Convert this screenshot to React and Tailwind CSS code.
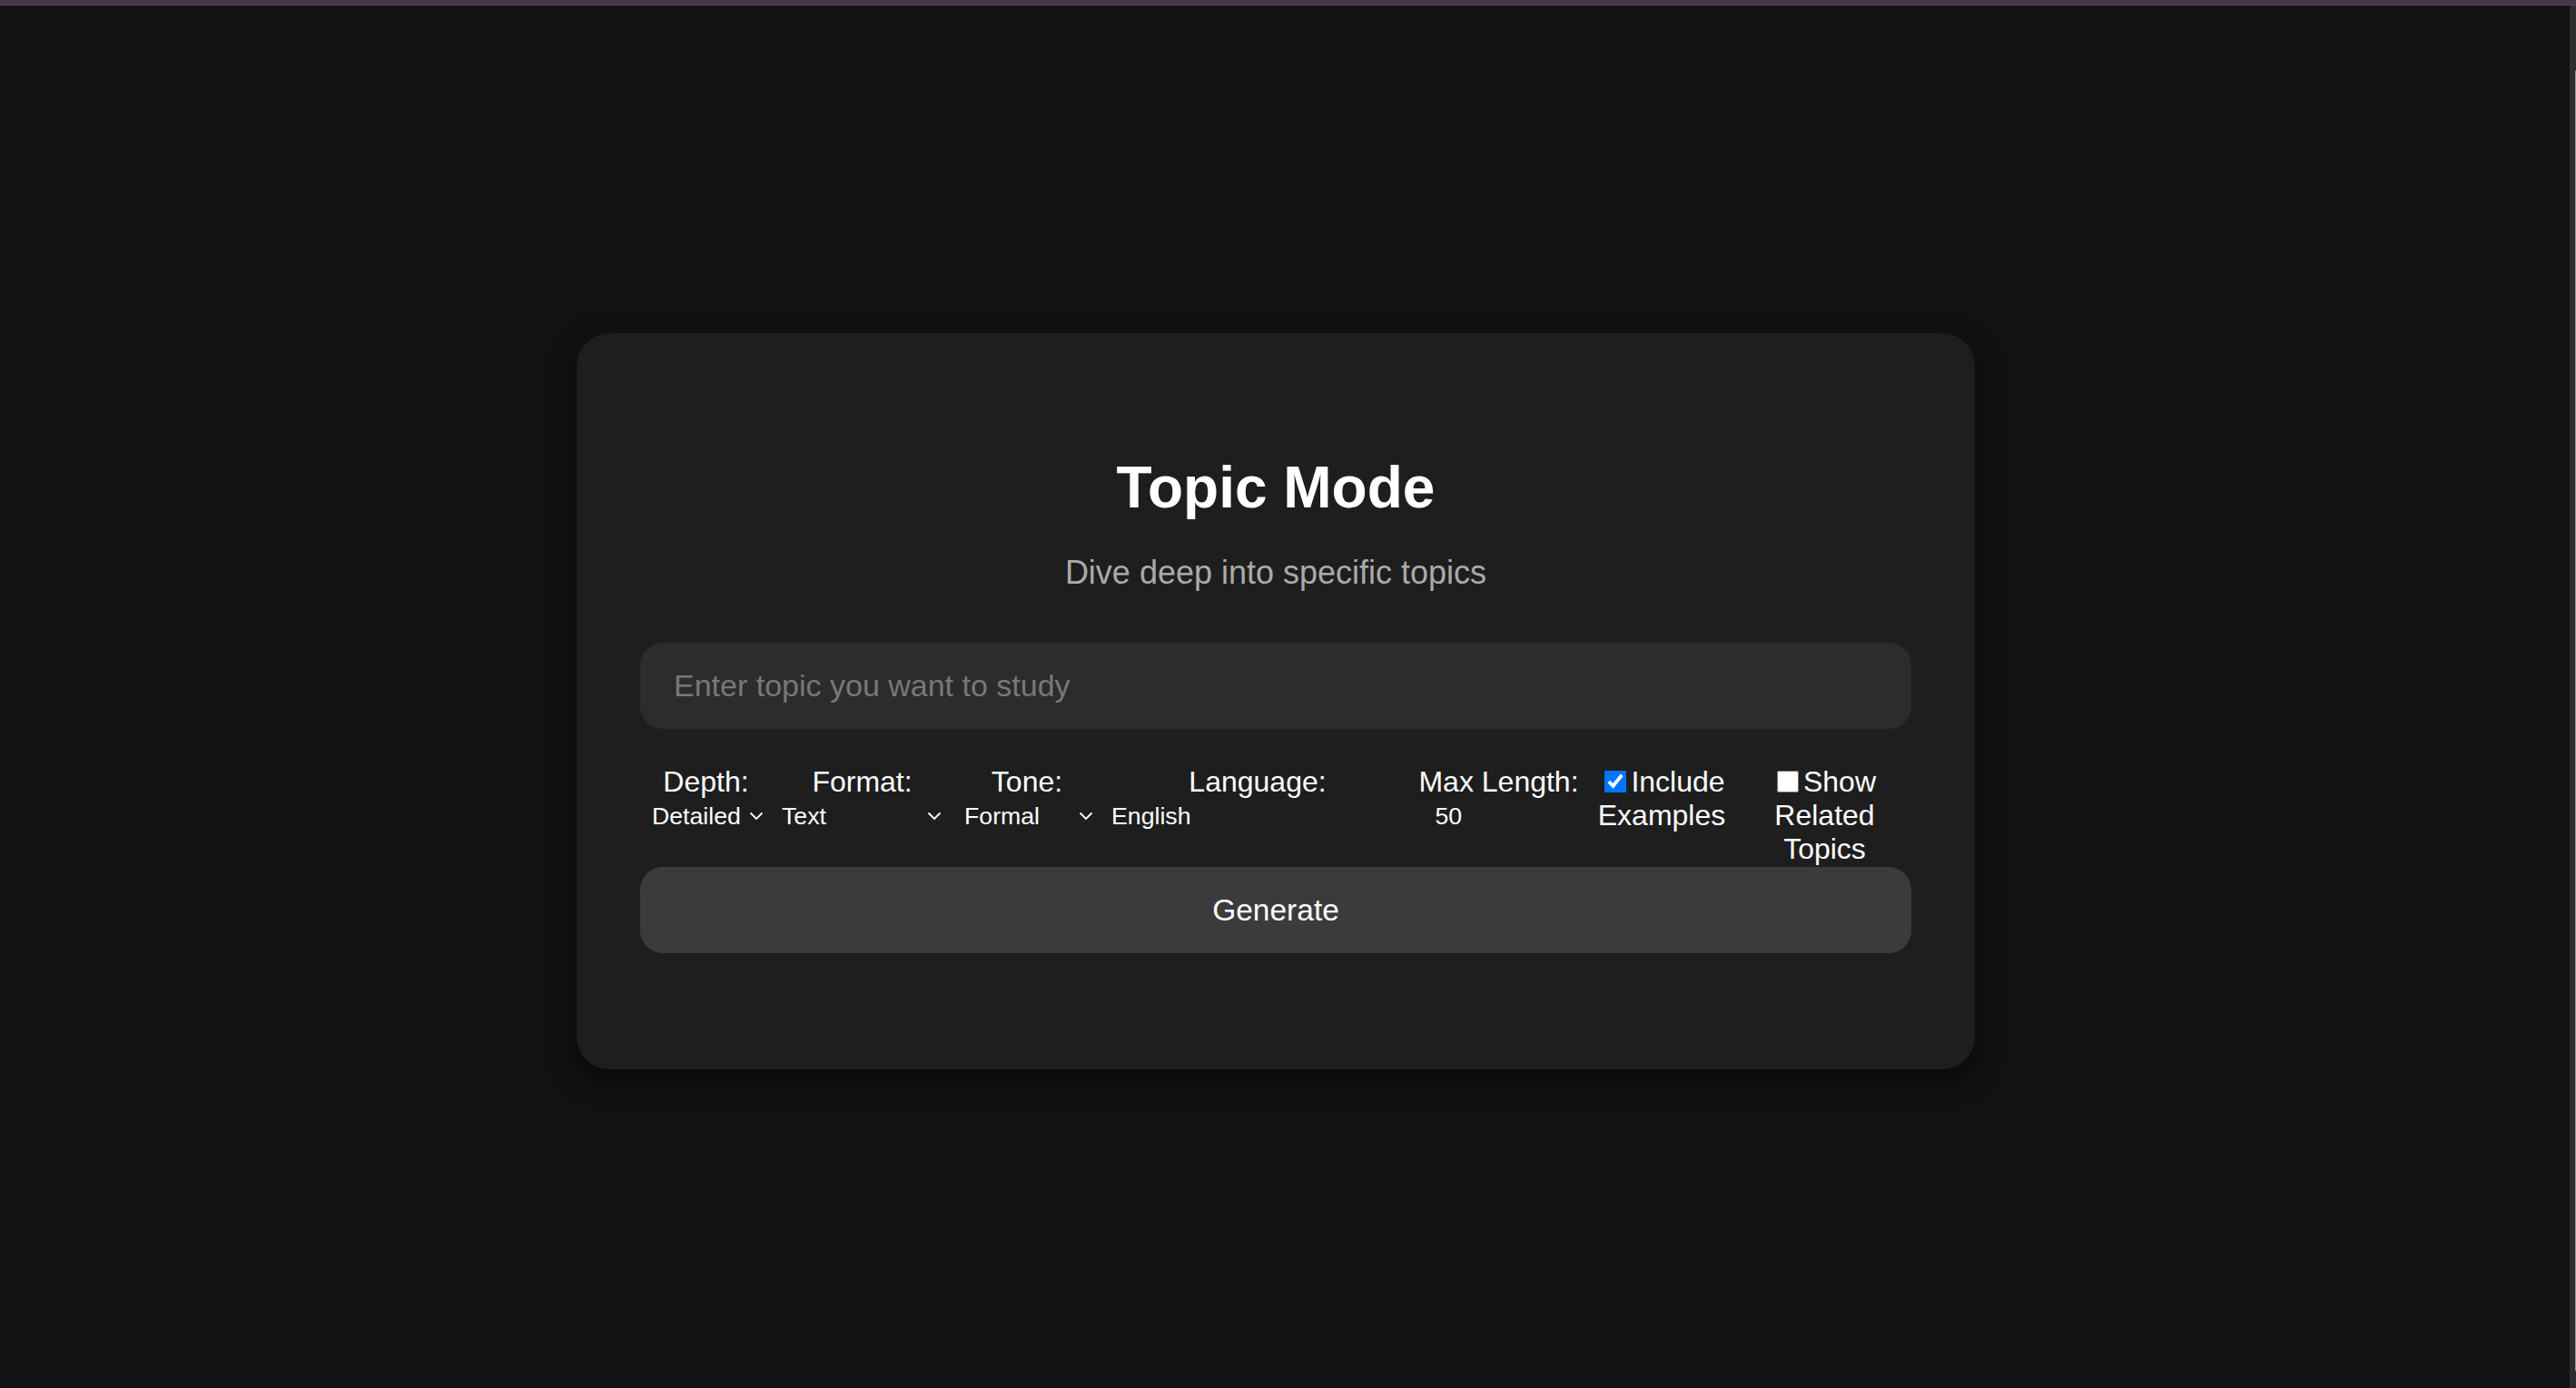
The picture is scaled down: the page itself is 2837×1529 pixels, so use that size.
import { useState } from "react";

const depths = ["Detailed", "Overview", "Summary"];
const formats = ["Text", "Bullet Points", "Q&A"];
const tones = ["Formal", "Casual", "Academic"];

function Chevron({ gap }) {
  return (
    <svg width="16" height="10" viewBox="0 0 16 10" className={`shrink-0 ${gap}`}>
      <polyline points="1.5,1.5 8,8 14.5,1.5" fill="none" stroke="#ffffff" strokeWidth="1.8" />
    </svg>
  );
}

function SelectField({ label, options, value, onChange, width, gap = "mr-[4px]" }) {
  return (
    <div className={`flex flex-col items-center ${width}`}>
      <span className="text-[32px] leading-[37px] text-white whitespace-nowrap pr-[8px]">{label}</span>
      <div className="h-[37px] w-full flex items-center pt-[2px]">
        <select
          value={value}
          onChange={(e) => onChange(e.target.value)}
          className="flex-1 min-w-0 appearance-none bg-transparent text-white text-[26.7px] leading-[35px] outline-none"
        >
          {options.map((o) => (
            <option key={o} value={o} className="text-black">{o}</option>
          ))}
        </select>
        <Chevron gap={gap} />
      </div>
    </div>
  );
}

export default function App() {
  const [depth, setDepth] = useState("Detailed");
  const [format, setFormat] = useState("Text");
  const [tone, setTone] = useState("Formal");
  const [topic, setTopic] = useState("");

  return (
    <div className="h-[1529px] w-full overflow-hidden flex flex-col bg-[#121212] font-['Liberation_Sans',Arial,sans-serif]">
      {/* window strip */}
      <div className="h-[6px] bg-[#4a3247] border-b border-[#584756] shrink-0" />

      <div className="flex flex-1 min-h-0">
        <main className="flex-1 flex items-center justify-center pt-[10px] pr-[20px]">
          <div className="w-[1540px] bg-[#1e1e1e] rounded-[36px] px-[70px] pt-[133px] pb-[128px] shadow-[0_10px_30px_rgba(0,0,0,0.55)]">
            <h1 className="text-center text-white text-[64px] font-bold leading-[74px]">Topic Mode</h1>
            <p className="mt-[37px] text-center text-[#aaaaaa] text-[36px] leading-[40px]">Dive deep into specific topics</p>

            <input
              value={topic}
              onChange={(e) => setTopic(e.target.value)}
              placeholder="Enter topic you want to study"
              className="mt-[57px] w-full h-[95px] rounded-[25px] bg-[#2c2c2c] px-[37px] text-[34px] text-white placeholder:text-[#787878] outline-none"
            />

            {/* options */}
            <div className="mt-[40px] flex items-start gap-[16px] pl-[13px]">
              <SelectField label="Depth:" options={depths} value={depth} onChange={setDepth} width="w-[127px]" />
              <SelectField label="Format:" options={formats} value={format} onChange={setFormat} width="w-[185px]" gap="mr-[9px]" />
              <SelectField label="Tone:" options={tones} value={tone} onChange={setTone} width="w-[146px]" />

              <div className="flex flex-col items-center w-[322px]">
                <span className="text-[32px] leading-[37px] text-white">Language:</span>
                <input
                  defaultValue="English"
                  className="w-full h-[37px] pt-[2px] bg-transparent text-white text-[26.7px] outline-none"
                />
              </div>

              <div className="flex flex-col items-center w-[177px]">
                <span className="text-[32px] leading-[37px] text-white whitespace-nowrap">Max Length:</span>
                <input
                  type="number"
                  defaultValue={50}
                  className="w-[140px] h-[37px] pt-[2px] bg-transparent text-white text-[26.7px] outline-none"
                />
              </div>

              <label className="flex flex-col items-center w-[150px] text-[32px] leading-[37px] text-white">
                <span className="flex items-center gap-[5px] pl-[7px]">
                  <input type="checkbox" defaultChecked className="w-[24px] h-[24px]" />
                  Include
                </span>
                <span>Examples</span>
              </label>

              <label className="flex flex-col items-center w-[177px] text-[32px] leading-[37px] text-white">
                <span className="flex items-center gap-[5px] pl-[4px]">
                  <input type="checkbox" className="w-[24px] h-[24px]" />
                  Show
                </span>
                <span>Related</span>
                <span>Topics</span>
              </label>
            </div>

            <button className="mt-[1.5px] w-full h-[95px] rounded-[25px] bg-[#3b3b3b] text-white text-[33.5px]">
              Generate
            </button>
          </div>
        </main>

        {/* scrollbar */}
        <div className="w-[7px] shrink-0 bg-[#2e2e2e] flex justify-end">
          <div className="w-[1px] mt-[72px] mb-[19px] bg-[#9e9e9e]" />
        </div>
      </div>
    </div>
  );
}
